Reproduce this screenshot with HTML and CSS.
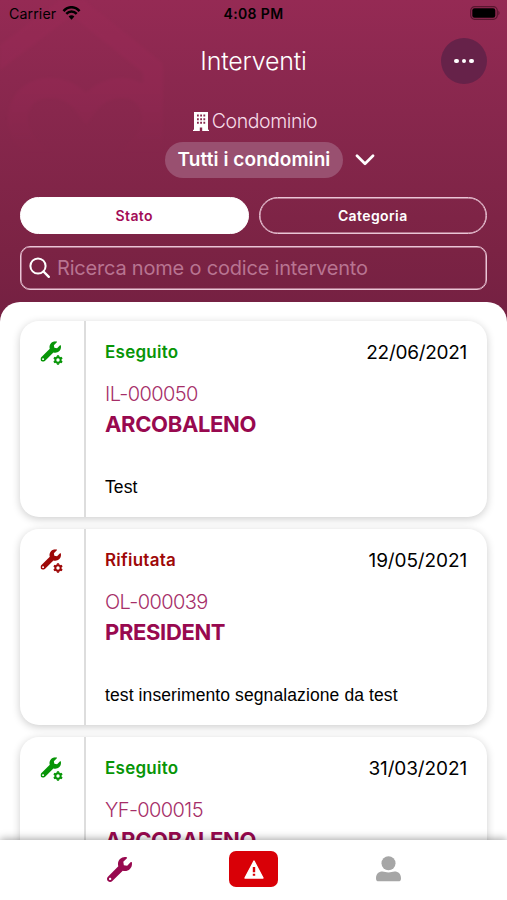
FILE: index.html
```html
<!DOCTYPE html>
<html lang="it">
<head>
<meta charset="utf-8">
<meta name="viewport" content="width=device-width, initial-scale=1">
<title>Interventi</title>
<link rel="stylesheet" href="styles.css">
</head>
<body>
<svg class="defs" aria-hidden="true">
  <symbol id="wrench" viewBox="0 0 512 512"><path d="M507.73 109.1c-2.24-9.03-13.54-12.09-20.12-5.51l-74.36 74.36-67.88-11.31-11.31-67.88 74.36-74.36c6.62-6.62 3.43-17.9-5.66-20.16-47.38-11.74-99.55.91-136.58 37.93-39.64 39.64-50.55 97.1-34.05 147.2L18.74 402.76c-24.99 24.99-24.99 65.51 0 90.5 24.99 24.99 65.51 24.99 90.5 0l213.21-213.21c50.12 16.71 107.47 5.68 147.37-34.22 37.07-37.07 49.7-89.32 37.91-136.73zM64 472c-13.25 0-24-10.75-24-24 0-13.26 10.75-24 24-24s24 10.74 24 24c0 13.25-10.75 24-24 24z"/></symbol>
  <symbol id="service" viewBox="0 0 24 25">
    <use href="#wrench" x="0.5" y="0.2" width="20.5" height="20.5"/>
    <circle cx="18" cy="19" r="5.6" fill="#fff"/>
    <circle cx="18" cy="19" r="2.7" fill="none" stroke="currentColor" stroke-width="2"/>
    <path d="M18 14.2v1.5M18 22.3v1.5M13.9 16.6l1.3.8M20.8 20.6l1.3.8M13.9 21.4l1.3-.8M20.8 17.4l1.3-.8" stroke="currentColor" stroke-width="2.2"/>
  </symbol>
</svg>
<div class="app">
  <header class="header">
    <svg class="watermark" viewBox="0 0 170 190" aria-hidden="true">
      <path d="M-6 62L72 3L153 68V160" fill="none" stroke="#a02a59" stroke-width="20" stroke-linejoin="round"/>
      <path d="M84 185L30 148C9 125 16 88 50 88C68 88 78 97 86 108C94 97 105 88 122 88C153 89 162 125 138 148Z" fill="none" stroke="#a02a59" stroke-width="20"/>
    </svg>
    <div class="status">
      <div class="carrier"><span>Carrier</span>
        <svg width="19" height="14" viewBox="0 0 19 14"><path d="M1.5 5.1C6-.1 13-.1 17.5 5.1M4.3 7.9c3-3.2 7.4-3.2 10.4 0" fill="none" stroke="#000" stroke-width="2.5"/><path d="M6.6 10.4c1.7-1.7 4.1-1.7 5.8 0L9.5 13.7z"/></svg>
      </div>
      <div class="clock">4:08 PM</div>
      <svg class="battery" width="31" height="14" viewBox="0 0 31 14"><rect x=".7" y=".7" width="26.6" height="12.6" rx="4" fill="none" stroke="#59162f" stroke-width="1.2"/><rect x="2.3" y="2.3" width="23" height="9.4" rx="2.2"/><path d="M28.4 4.5q2.3 2.5 0 5z" fill="#59162f"/></svg>
    </div>
    <div class="title-row">
      <h1 class="title">Interventi</h1>
      <div class="more"><i></i><i></i><i></i></div>
    </div>
    <div class="scope">
      <svg width="16" height="19" viewBox="0 0 16 19"><path fill="#fff" fill-rule="evenodd" d="M1 0h14v17.8h1V19H9.2v-3.4H6.8V19H0v-1.2h1zM4 2.6v2h1.8v-2zm3.2 0v2H9v-2zm3.2 0v2h1.8v-2zM4 6.2v2h1.8v-2zm3.2 0v2H9v-2zm3.2 0v2h1.8v-2zM4 9.8v2h1.8v-2zm3.2 0v2H9v-2zm3.2 0v2h1.8v-2z"/></svg>
      <span>Condominio</span>
    </div>
    <div class="picker">
      <div class="pill"><span>Tutti i condomini</span></div>
      <svg width="20" height="12" viewBox="0 0 20 12"><path d="M2 1.8l8 8 8-8" fill="none" stroke="#fff" stroke-width="2.7" stroke-linecap="round" stroke-linejoin="round"/></svg>
    </div>
    <div class="filters">
      <div class="filter active"><span>Stato</span></div>
      <div class="filter"><span>Categoria</span></div>
    </div>
    <div class="search">
      <svg width="22" height="22" viewBox="0 0 22 22"><circle cx="9" cy="9" r="7.6" fill="none" stroke="#fff" stroke-width="2"/><path d="M14.5 14.5l5.3 5.3" stroke="#fff" stroke-width="2.4" stroke-linecap="round"/></svg>
      <span>Ricerca nome o codice intervento</span>
    </div>
  </header>
  <main class="sheet">
    <article class="card">
      <div class="side done"><svg width="24" height="25"><use href="#service"/></svg></div>
      <div class="body">
        <div class="top"><span class="state done">Eseguito</span><time class="wide">22/06/2021</time></div>
        <div class="code">IL-000050</div>
        <div class="name">ARCOBALENO</div>
        <p class="note">Test</p>
      </div>
    </article>
    <article class="card">
      <div class="side refused"><svg width="24" height="25"><use href="#service"/></svg></div>
      <div class="body">
        <div class="top"><span class="state refused">Rifiutata</span><time>19/05/2021</time></div>
        <div class="code">OL-000039</div>
        <div class="name">PRESIDENT</div>
        <p class="note">test inserimento segnalazione da test</p>
      </div>
    </article>
    <article class="card">
      <div class="side done"><svg width="24" height="25"><use href="#service"/></svg></div>
      <div class="body">
        <div class="top"><span class="state done">Eseguito</span><time>31/03/2021</time></div>
        <div class="code">YF-000015</div>
        <div class="name">ARCOBALENO</div>
      </div>
    </article>
  </main>
  <nav class="tabs">
    <div class="tab"><svg class="tool" width="25" height="25"><use href="#wrench"/></svg></div>
    <div class="tab"><div class="alert"><svg width="20" height="19" viewBox="0 0 20 19"><path d="M10 1L19 18H1z" fill="#fff" stroke="#fff" stroke-width="1.4" stroke-linejoin="round"/><path d="M8.8 7h2.4v5.3H8.8zM8.8 13.8h2.4v2H8.8z" fill="#d90007"/></svg></div></div>
    <div class="tab"><svg width="25" height="26" viewBox="0 0 25 26" fill="#a6a6a6"><circle cx="12.5" cy="7.2" r="7"/><path d="M0 22.4c0-4.4 2.5-6.9 6.5-6.9 2 0 3.5 1 6 1s4-1 6-1c4 0 6.5 2.5 6.5 6.9 0 2-1 2.8-2.5 2.8h-20C1 25.2 0 24.4 0 22.4z"/></svg></div>
  </nav>
</div>
</body>
</html>
```
FILE: styles.css
```css
* { box-sizing: border-box; }
body { margin: 0; font-family: Inter, "Liberation Sans", sans-serif; color: #000; background: #fff; }
svg { display: block; flex: none; }
span, time { white-space: nowrap; }
.defs { position: absolute; width: 0; height: 0; }
.app { height: 900px; display: flex; flex-direction: column; overflow: hidden; }
.header { position: relative; flex: none; height: 322px; padding: 0 20px; background: linear-gradient(#952a54 0, #8b284f 80px, #7b2344 250px, #742042 322px); }
.header > * { position: relative; }
.header .watermark { position: absolute; left: 0; top: 0; width: 170px; height: 190px; opacity: .26; filter: blur(1.5px); -webkit-mask-image: linear-gradient(#000 80px, transparent 155px); mask-image: linear-gradient(#000 80px, transparent 155px); }
.status { display: grid; grid-template-columns: 1fr auto 1fr; align-items: center; height: 26px; margin: 0 -12px 0 -11px; }
.carrier { display: flex; align-items: center; gap: 6px; font-size: 14.2px; letter-spacing: .1px; }
.clock { font-size: 14px; font-weight: 600; letter-spacing: .35px; margin-right: 1px; }
.battery { justify-self: end; margin-right: -2px; }
.title-row { display: grid; grid-template-columns: 1fr auto 1fr; align-items: center; height: 70px; }
.title { grid-column: 2; margin: 0; font-size: 25px; font-weight: 300; color: #fff; letter-spacing: -.2px; }
.more { justify-self: end; display: flex; justify-content: center; align-items: center; gap: 2.8px; width: 46px; height: 46px; border-radius: 50%; background: #662249; }
.more i { width: 4.6px; height: 4.6px; border-radius: 50%; background: #fff; }
.scope { display: flex; justify-content: center; align-items: center; gap: 3px; height: 24px; margin-top: 13px; padding-left: 3px; font-size: 19.5px; font-weight: 300; letter-spacing: -.42px; color: #f7dce8; }
.picker { display: flex; align-items: center; gap: 12px; margin: 9px 0 0 145px; height: 35px; }
.pill { display: flex; align-items: center; justify-content: center; width: 178px; height: 36px; border-radius: 18px; background: #995070; color: #fff; font-size: 19px; font-weight: 600; letter-spacing: .08px; }
.filters { display: grid; grid-template-columns: 1fr 1fr; gap: 10px; margin-top: 20px; }
.filter { display: flex; align-items: center; justify-content: center; height: 37px; border: 1.5px solid #eac5d6; border-radius: 19px; color: #fff; font-size: 14px; font-weight: 600; letter-spacing: .4px; box-shadow: inset 0 0 0 .5px #eac5d6; }
.filter.active { background: #fff; border-color: #fff; color: #a30d57; box-shadow: none; }
.search { display: flex; align-items: center; gap: 6px; height: 44px; margin-top: 12px; padding-left: 8px; border: 1.5px solid #eac5d6; border-radius: 10px; color: #b87491; font-size: 20px; letter-spacing: -.2px; box-shadow: inset 0 0 0 .5px #eac5d6; }
.sheet { position: relative; flex: 1; min-height: 0; margin-top: -20px; padding: 19px 20px 0; border-radius: 20px 20px 0 0; background: #fff; overflow: hidden; display: flex; flex-direction: column; gap: 12px; }
.card { display: flex; flex: none; height: 196px; border-radius: 19px; background: #fff; box-shadow: 0 2px 8px rgba(0,0,0,.2); }
.side { width: 66px; border-right: 2px solid #ddd; padding: 20px 0 0 20px; }
.done { color: #079507; }
.refused { color: #9e0808; }
.side svg, .tool { fill: currentColor; }
.body { flex: 1; padding: 20px 20px 0 19px; }
.top { display: flex; justify-content: space-between; align-items: center; height: 22px; }
.state { font-size: 17px; font-weight: 600; letter-spacing: .25px; }
time { font-size: 19px; letter-spacing: -.12px; }
time.wide { letter-spacing: -.28px; }
.code { height: 24px; margin-top: 19px; line-height: 24px; font-size: 20px; font-weight: 300; letter-spacing: -.6px; color: #a62e68; }
.name { height: 28px; margin-top: 4px; line-height: 28px; font-size: 22px; font-weight: 700; letter-spacing: -.35px; color: #98094f; }
.note { margin: 38px 0 0; font: 17.5px/22px "Liberation Sans", sans-serif; letter-spacing: .1px; }
.tabs { position: relative; flex: none; height: 60px; padding-bottom: 2px; display: grid; grid-template-columns: repeat(3, 134.5px); justify-content: center; background: #fff; box-shadow: 0 -1px 8px rgba(0,0,0,.36); }
.tab { display: flex; justify-content: center; align-items: center; }
.tool { color: #98094f; }
.alert { display: flex; justify-content: center; align-items: center; width: 49px; height: 36px; border-radius: 7px; background: #d90007; }
```
